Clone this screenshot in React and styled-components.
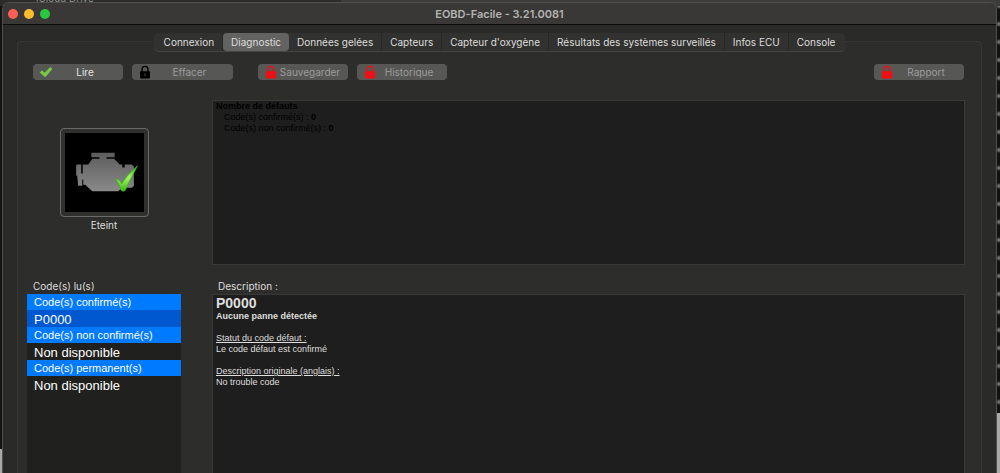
import React, { useState } from 'react';
import styled, { createGlobalStyle, css } from 'styled-components';

const GlobalStyle = createGlobalStyle`
  * {
    box-sizing: border-box;
  }

  body {
    margin: 0;
    background: #161615;
    color: #dededd;
    font-family: Inter, "Liberation Sans", sans-serif;
    font-size: 10px;
    line-height: 12px;
    overflow: hidden;
  }

  button {
    font-family: inherit;
  }
`;

const Desktop = styled.div`
  position: relative;
  display: flex;
  height: 100vh;
  padding: 2px 3px 0 2px;
  overflow: hidden;
  background:
    linear-gradient(#3c3c3b, #3c3c3b) right top / calc(100% - 341px) 6px no-repeat,
    linear-gradient(#2c2c2b, #2c2c2b) left top / 341px 6px no-repeat,
    linear-gradient(#a9a9a7, #a9a9a7) right bottom / 4px 60px no-repeat,
    linear-gradient(#a9a9a7, #a9a9a7) left bottom / 3px 24px no-repeat,
    radial-gradient(circle at 2px 6px, #6e6e6c 1px, transparent 3px) right top / 3px 18px repeat-y,
    #121212;
`;

const FinderItem = styled.span`
  position: absolute;
  top: -8px;
  left: 36px;
  color: #8c8c8a;
  font-size: 10px;
  line-height: 12px;
`;

const Window = styled.div`
  position: relative;
  flex: 1;
  display: flex;
  flex-direction: column;
  min-width: 0;
  background: #2a2a28;
  border: 1px solid #50504e;
  border-bottom: 0;
  border-radius: 7px 7px 0 0;
  overflow: hidden;
`;

const TitleBar = styled.header`
  display: grid;
  grid-template-columns: 1fr auto 1fr;
  align-items: center;
  height: 22px;
  flex: none;
  padding: 0 5px;
  background: #393836;
  border-bottom: 1px solid #0c0c0c;
`;

const Lights = styled.div`
  display: flex;
  gap: 6px;
`;

const Light = styled.button`
  width: 10px;
  height: 10px;
  padding: 0;
  border: 0;
  border-radius: 50%;
  background: ${({ $color }) => $color};
`;

const Title = styled.h1`
  margin: 0;
  color: #b4b4b2;
  font-size: 11px;
  font-weight: 600;
`;

const Content = styled.main`
  flex: 1;
  display: flex;
  flex-direction: column;
  min-height: 0;
  padding: 8px 14px 0;
`;

const TabBar = styled.nav`
  z-index: 1;
  align-self: center;
  display: flex;
  height: 18px;
  margin-bottom: -10px;
  padding: 0 2px;
  background: #31312f;
  border-radius: 5px;
  box-shadow: 0 1px 0 #454543;
`;

const Tab = styled.button`
  padding: 0 8px;
  border: 0;
  border-right: 1px solid #272726;
  border-radius: 0;
  background: transparent;
  color: #dededd;
  font-size: 10px;
  line-height: 16px;
  white-space: nowrap;

  &:last-child {
    border-right: 0;
  }

  ${({ $active }) => $active && css`
    border-right: 0;
    border-radius: 4px;
    background: #636361;
  `}
`;

const GroupBox = styled.section`
  flex: 1;
  display: flex;
  flex-direction: column;
  min-height: 0;
  padding: 22px 16px 0 9px;
  background: #2d2d2b;
  border: 1px solid #363634;
  border-bottom: 0;
  border-radius: 4px 4px 0 0;
`;

const Toolbar = styled.div`
  display: flex;
  padding: 0 1px 0 6px;
  gap: 9px;
`;

const ToolGroup = styled.div`
  display: flex;
  gap: 9px;

  & + & {
    margin-left: 16px;
  }

  &:last-child {
    margin-left: auto;
  }
`;

const ToolButton = styled.button`
  display: grid;
  grid-template-columns: 14px 1fr;
  align-items: center;
  width: ${({ $wide }) => ($wide ? 101 : 90)}px;
  height: 16px;
  padding: 0 6px;
  border: 0;
  border-radius: 4px;
  background: #575756;
  color: #e4e4e3;
  font-size: 10px;
  line-height: 16px;

  &:disabled {
    color: #9c9c9b;
  }

  svg {
    display: block;
  }
`;

const Summary = styled.div`
  display: grid;
  grid-template-columns: 154px 1fr;
  gap: 31px;
  height: 165px;
  margin-top: 20px;
  flex: none;
`;

const Status = styled.figure`
  display: flex;
  flex-direction: column;
  align-items: center;
  gap: 2px;
  margin: 0;
  padding-top: 28px;
`;

const StatusFrame = styled.div`
  width: 89px;
  height: 89px;
  padding: 4px;
  border: 1px solid #6a6a68;
  border-radius: 4px;
  background: #30302f;

  svg {
    display: block;
    width: 100%;
    height: 100%;
  }
`;

const Report = styled.div`
  padding: 0 3px;
  background: #1e1e1e;
  border: 1px solid #393938;
  color: #dededd;
  font-family: "Liberation Sans", Arial, sans-serif;
  font-size: 9px;
  line-height: 11px;

  p {
    margin: 0;
  }

  p + h3 {
    margin-top: 11px;
  }
`;

const SummaryReport = styled(Report)`
  color: #000;
`;

const DetailReport = styled(Report)`
  border-bottom: 0;
`;

const Indented = styled.p`
  padding-left: 8px;
`;

const FaultCode = styled.h2`
  margin: 0;
  font-size: 14px;
  line-height: 16px;
`;

const ReportHeading = styled.h3`
  margin: 0;
  font-size: inherit;
  font-weight: 400;
  text-decoration: underline;
`;

const Details = styled.div`
  flex: 1;
  display: grid;
  grid-template-columns: 154px 1fr;
  grid-template-rows: 14px 1fr;
  column-gap: 31px;
  min-height: 0;
  margin-top: 15px;
`;

const Label = styled.h2`
  margin: 0;
  padding-left: 6px;
  font-size: 10px;
  font-weight: 400;
  line-height: 12px;
`;

const CodeList = styled.div`
  background: #20201e;
  color: #fff;
  font-family: "Liberation Sans", Arial, sans-serif;
`;

const CodeHeader = styled.div`
  height: 16px;
  padding-left: 7px;
  background: #007aff;
  font-size: 11px;
  line-height: 16px;
`;

const CodeRow = styled.button`
  display: block;
  width: 100%;
  height: 17px;
  padding: 0 7px;
  border: 0;
  background: ${({ $selected }) => ($selected ? '#0058d0' : 'transparent')};
  color: inherit;
  font-size: 13px;
  line-height: 19px;
  text-align: left;
`;

const CheckIcon = () => (
  <svg width="14" height="14" viewBox="0 0 14 14" aria-hidden="true">
    <path d="M0.800 7.400 3 5.200 5.700 7.700 11.200 1.900 13.400 3.900 6.200 12.200Z" fill="#7ac943" />
  </svg>
);

const LockIcon = ({ color }) => (
  <svg width="14" height="14" viewBox="0 0 14 14" aria-hidden="true">
    <path d="M4 7V4.8a3 3.4 0 0 1 6 0V7" fill="none" stroke={color} strokeWidth="1.4" />
    <rect x="2" y="6.3" width="10" height="7.2" rx="1" fill={color} />
    <path d="M6.4 8.6h1.2v2.600H6.400z" fill="#575756" opacity="0.7" />
  </svg>
);

const EngineIcon = () => (
  <svg viewBox="0 0 78 78" preserveAspectRatio="none" role="img" aria-label="Voyant moteur éteint">
    <defs>
      <linearGradient id="metal" x1="0" y1="0" x2="0" y2="1">
        <stop offset="0" stopColor="#5c5c5c" />
        <stop offset="1" stopColor="#8a8a8a" />
      </linearGradient>
      <linearGradient id="tick" x1="0" y1="0" x2="0" y2="1">
        <stop offset="0" stopColor="#2fa60c" />
        <stop offset="0.45" stopColor="#a4f66c" />
        <stop offset="1" stopColor="#35b80c" />
      </linearGradient>
    </defs>
    <rect width="78" height="78" fill="#000" />
    <path
      d="M26 19.500H49V24H41V25.500H48.500L54 31H56.500V34H59V31H66L68 33V52L66 54H57L52.500 57.500H27L20 51H18V46H17V52H13L12 42H11V32L12 31H16V40H17.500V31H23L27 25.500H34V24H26Z"
      fill="url(#metal)"
    />
    <path
      d="M50 45.500Q53.500 45.500 56 50Q62 40 71.500 32.500Q64.500 45 59.500 56.500Q57.500 58.500 55.500 56.500Q53.500 50 50 45.500Z"
      fill="url(#tick)"
      stroke="#36b910"
      strokeWidth="0.8"
    />
  </svg>
);

const TABS = [
  'Connexion',
  'Diagnostic',
  'Données gelées',
  'Capteurs',
  "Capteur d'oxygène",
  'Résultats des systèmes surveillés',
  'Infos ECU',
  'Console',
];

const CODES = [
  { title: 'Code(s) confirmé(s)', value: 'P0000' },
  { title: 'Code(s) non confirmé(s)', value: 'Non disponible' },
  { title: 'Code(s) permanent(s)', value: 'Non disponible' },
];

const LockedButton = ({ label, color = '#f80c12', wide = false }) => (
  <ToolButton disabled $wide={wide}>
    <LockIcon color={color} />
    <span>{label}</span>
  </ToolButton>
);

const App = () => {
  const [tab, setTab] = useState('Diagnostic');
  const [selected, setSelected] = useState(0);

  return (
    <Desktop>
      <GlobalStyle />
      <FinderItem>iCloud Drive</FinderItem>
      <Window>
        <TitleBar>
          <Lights>
            <Light $color="#ff5f57" aria-label="Fermer" />
            <Light $color="#febc2e" aria-label="Réduire" />
            <Light $color="#28c840" aria-label="Agrandir" />
          </Lights>
          <Title>EOBD-Facile - 3.21.0081</Title>
        </TitleBar>
        <Content>
          <TabBar>
            {TABS.map((name) => (
              <Tab key={name} $active={name === tab} onClick={() => setTab(name)}>
                {name}
              </Tab>
            ))}
          </TabBar>
          <GroupBox>
            <Toolbar>
              <ToolGroup>
                <ToolButton>
                  <CheckIcon />
                  <span>Lire</span>
                </ToolButton>
                <LockedButton label="Effacer" color="#000" wide />
              </ToolGroup>
              <ToolGroup>
                <LockedButton label="Sauvegarder" />
                <LockedButton label="Historique" />
              </ToolGroup>
              <ToolGroup>
                <LockedButton label="Rapport" />
              </ToolGroup>
            </Toolbar>
            <Summary>
              <Status>
                <StatusFrame>
                  <EngineIcon />
                </StatusFrame>
                <figcaption>Eteint</figcaption>
              </Status>
              <SummaryReport>
                <p><b>Nombre de défauts</b></p>
                <Indented>Code(s) confirmé(s) : <b>0</b></Indented>
                <Indented>Code(s) non confirmé(s) : <b>0</b></Indented>
              </SummaryReport>
            </Summary>
            <Details>
              <Label>Code(s) lu(s)</Label>
              <Label>Description :</Label>
              <CodeList>
                {CODES.map(({ title, value }, i) => (
                  <React.Fragment key={title}>
                    <CodeHeader>{title}</CodeHeader>
                    <CodeRow $selected={i === selected} onClick={() => setSelected(i)}>
                      {value}
                    </CodeRow>
                  </React.Fragment>
                ))}
              </CodeList>
              <DetailReport>
                <FaultCode>P0000</FaultCode>
                <p><b>Aucune panne détectée</b></p>
                <ReportHeading>Statut du code défaut :</ReportHeading>
                <p>Le code défaut est confirmé</p>
                <ReportHeading>Description originale (anglais) :</ReportHeading>
                <p>No trouble code</p>
              </DetailReport>
            </Details>
          </GroupBox>
        </Content>
      </Window>
    </Desktop>
  );
};

export default App;
